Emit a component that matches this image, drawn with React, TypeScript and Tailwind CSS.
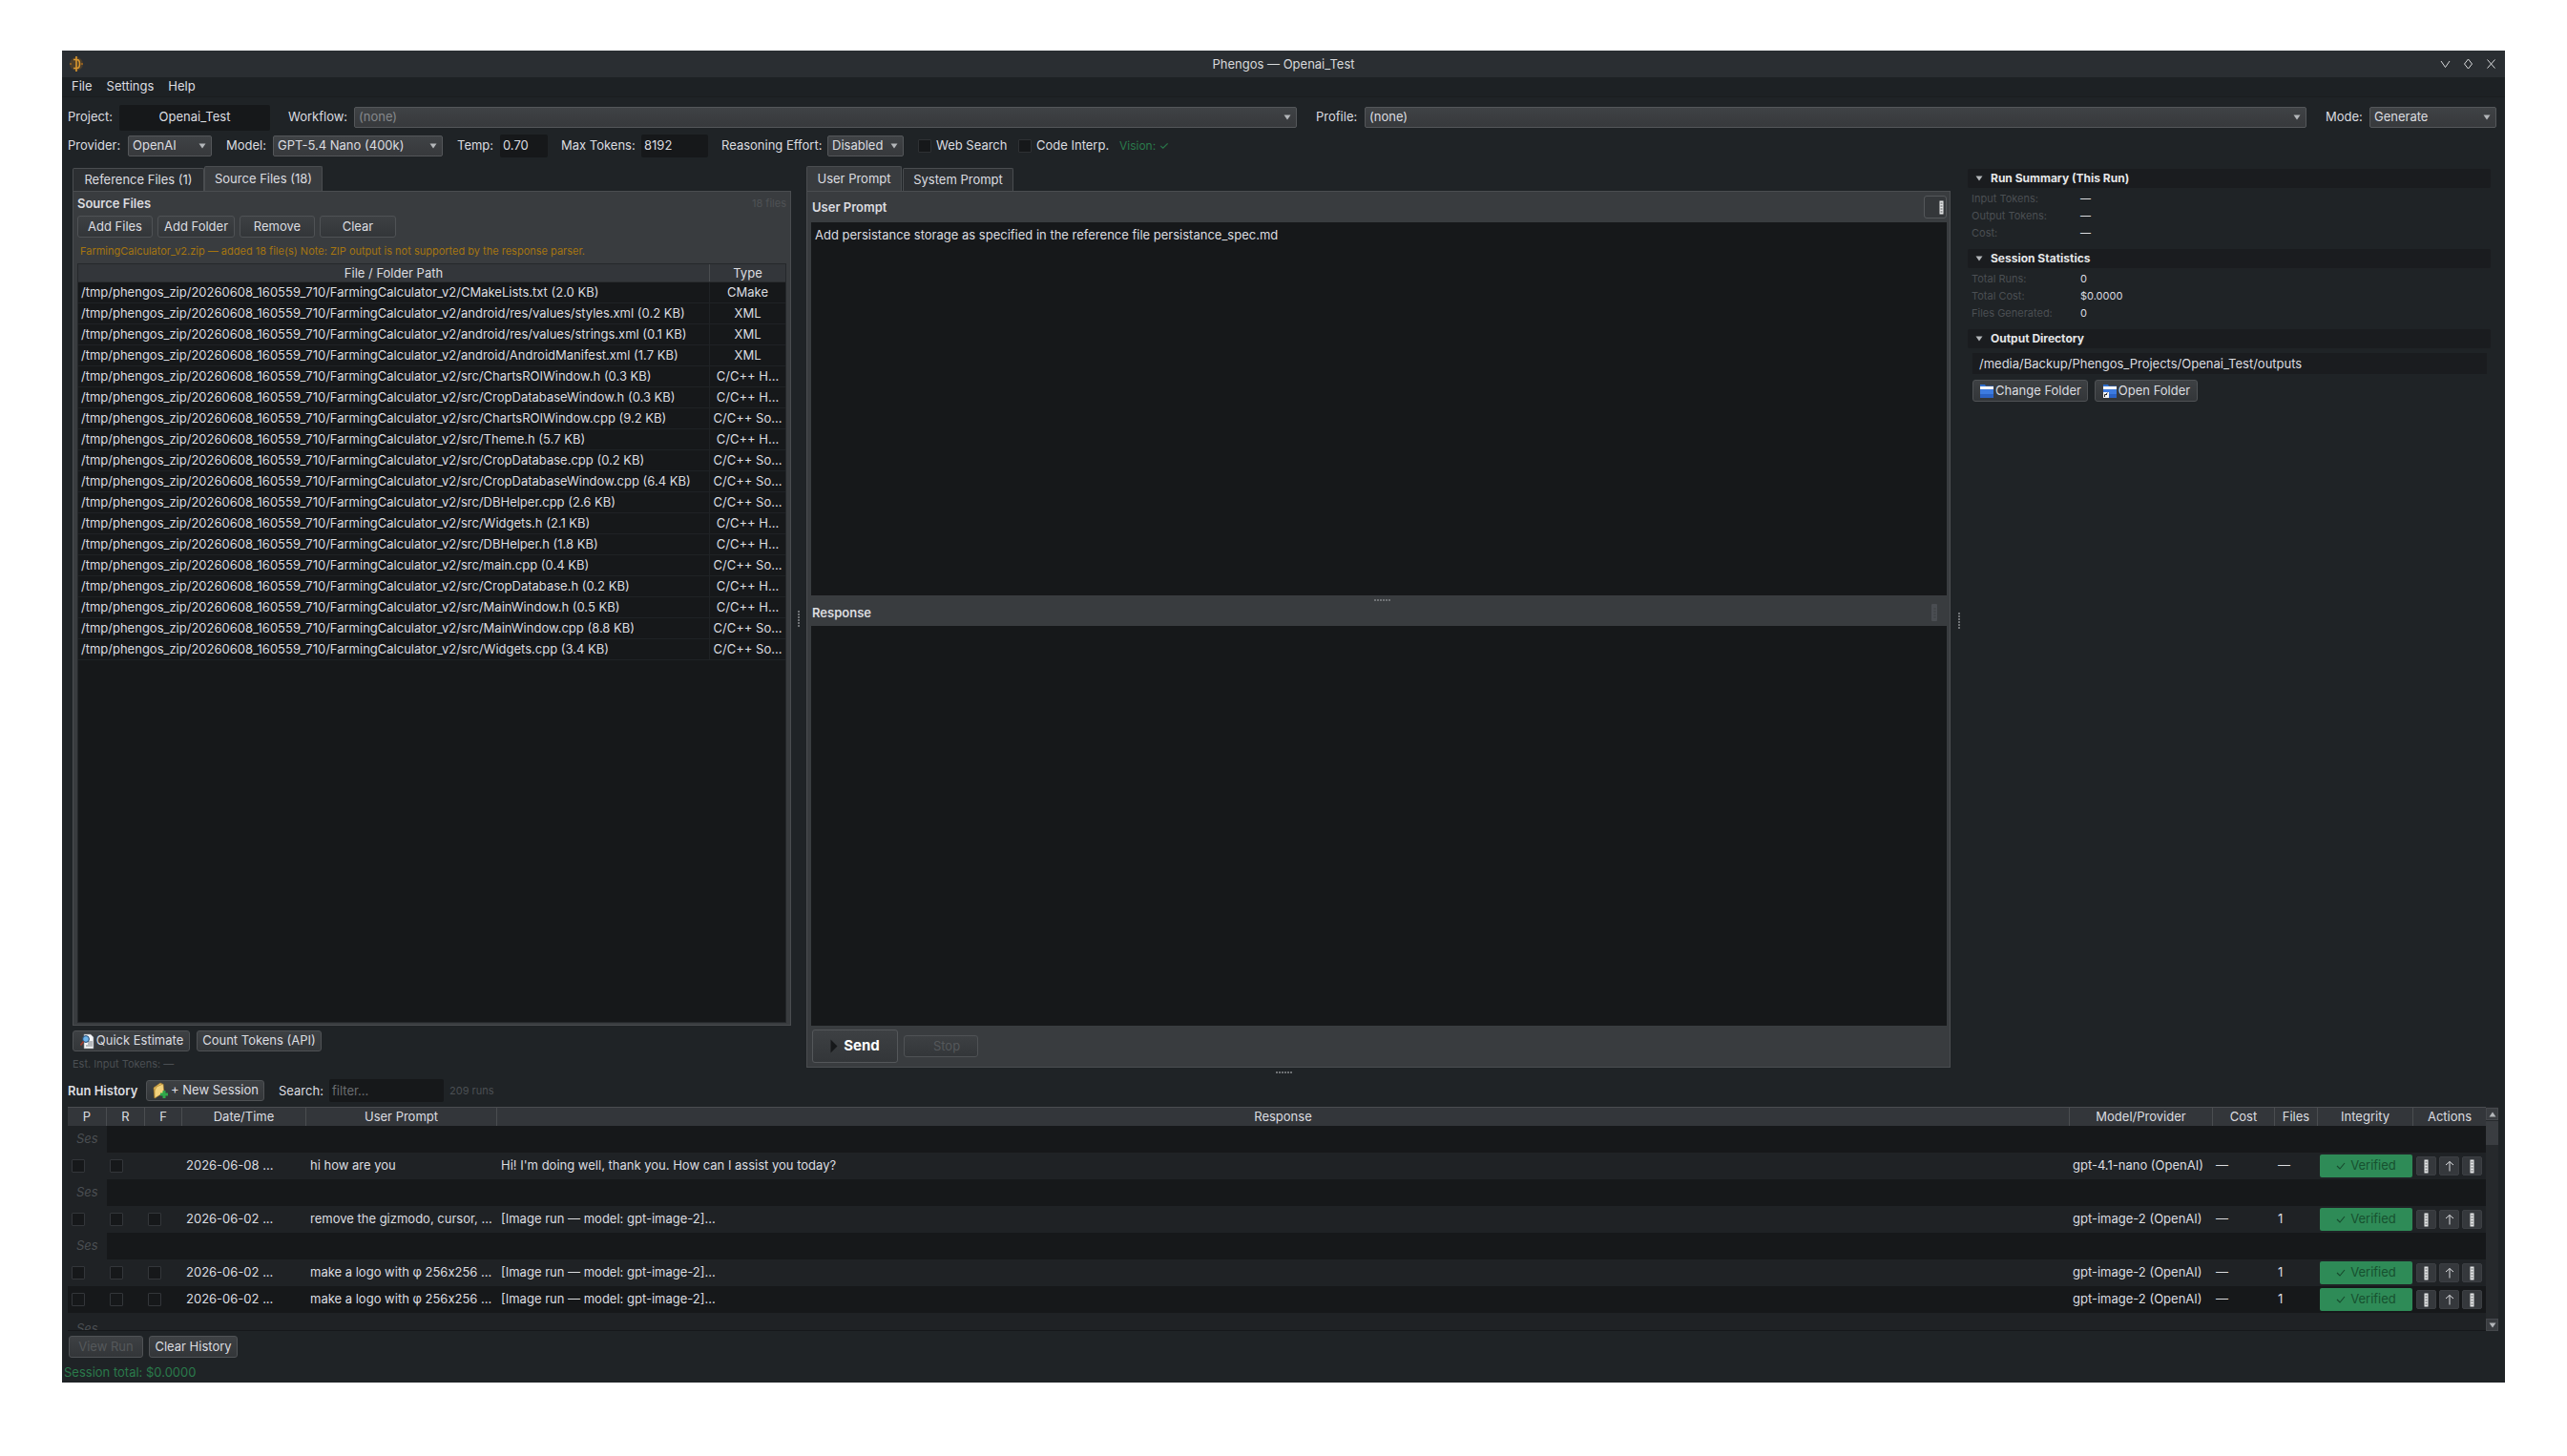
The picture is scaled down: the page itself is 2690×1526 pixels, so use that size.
import type { ReactNode } from "react";

const FILES: [string, string][] = [
  ["CMakeLists.txt (2.0 KB)", "CMake"],
  ["android/res/values/styles.xml (0.2 KB)", "XML"],
  ["android/res/values/strings.xml (0.1 KB)", "XML"],
  ["android/AndroidManifest.xml (1.7 KB)", "XML"],
  ["src/ChartsROIWindow.h (0.3 KB)", "C/C++ H..."],
  ["src/CropDatabaseWindow.h (0.3 KB)", "C/C++ H..."],
  ["src/ChartsROIWindow.cpp (9.2 KB)", "C/C++ So..."],
  ["src/Theme.h (5.7 KB)", "C/C++ H..."],
  ["src/CropDatabase.cpp (0.2 KB)", "C/C++ So..."],
  ["src/CropDatabaseWindow.cpp (6.4 KB)", "C/C++ So..."],
  ["src/DBHelper.cpp (2.6 KB)", "C/C++ So..."],
  ["src/Widgets.h (2.1 KB)", "C/C++ H..."],
  ["src/DBHelper.h (1.8 KB)", "C/C++ H..."],
  ["src/main.cpp (0.4 KB)", "C/C++ So..."],
  ["src/CropDatabase.h (0.2 KB)", "C/C++ H..."],
  ["src/MainWindow.h (0.5 KB)", "C/C++ H..."],
  ["src/MainWindow.cpp (8.8 KB)", "C/C++ So..."],
  ["src/Widgets.cpp (3.4 KB)", "C/C++ So..."],
];

const ZIP_ROOT = "/tmp/phengos_zip/20260608_160559_710/FarmingCalculator_v2/";

const HISTORY_COLS =
  "grid grid-cols-[40px_40px_39px_130px_200px_1648px_150px_65px_45px_100px_77px]";

function Arrow({ up = false }: { up?: boolean }) {
  return (
    <svg width="8" height="6" viewBox="0 0 8 6" className="shrink-0">
      <path d={up ? "M4 0.5 L7.5 5.5 L0.5 5.5 Z" : "M0.5 0.5 L7.5 0.5 L4 5.5 Z"} fill="#b4b7ba" />
    </svg>
  );
}

function Combo({
  w,
  children,
  dim = false,
}: {
  w: string;
  children: ReactNode;
  dim?: boolean;
}) {
  return (
    <div
      className={`${w} h-[22px] shrink-0 flex items-center justify-between pl-[4px] pr-[5px] rounded-[2px] border border-[#54575a] bg-gradient-to-b from-[#3f4245] to-[#37393c] ${
        dim ? "text-[#85888b]" : "text-[#dcdde0]"
      }`}
    >
      <span>{children}</span>
      <Arrow />
    </div>
  );
}

function Field({ w, children }: { w: string; children?: ReactNode }) {
  return (
    <div className={`${w} h-[24px] shrink-0 flex items-center pl-[3px] rounded-[2px] bg-[#16181a] text-[#dcdde0]`}>
      {children}
    </div>
  );
}

function Btn({
  w,
  h = "h-[23px]",
  children,
  disabled = false,
}: {
  w: string;
  h?: string;
  children: ReactNode;
  disabled?: boolean;
}) {
  return (
    <div
      className={`${w} ${h} shrink-0 flex items-center justify-center gap-[1px] rounded-[3px] border border-[#4f5255] bg-gradient-to-b from-[#3d4043] to-[#333639] ${
        disabled ? "text-[#55585b]" : "text-[#dcdde0]"
      }`}
    >
      {children}
    </div>
  );
}

function Tofu({ light = true }: { light?: boolean }) {
  return (
    <svg width="5" height="15" viewBox="0 0 5 15" className="shrink-0">
      <rect x="0.5" y="0.5" width="4" height="14" fill={light ? "#e4e5e6" : "#4a4e52"} stroke="none" />
      <path d="M1.5 3 H3.5 M1.5 6 H3.5 M1.5 9 H3.5 M1.5 12 H3.5" stroke={light ? "#55585b" : "#383b3e"} />
    </svg>
  );
}

function Dots({ vertical = false }: { vertical?: boolean }) {
  return vertical ? (
    <div className="flex flex-col gap-[1px]">
      {[0, 1, 2, 3, 4, 5].map((i) => (
        <span key={i} className="w-[2px] h-[2px] bg-[#6f7275]" />
      ))}
    </div>
  ) : (
    <div className="flex gap-[1px]">
      {[0, 1, 2, 3, 4, 5].map((i) => (
        <span key={i} className="w-[2px] h-[2px] bg-[#6f7275]" />
      ))}
    </div>
  );
}

function FolderIcon({ link = false }: { link?: boolean }) {
  return (
    <svg width="16" height="18" viewBox="0 0 16 18" className="shrink-0">
      <path d="M1 2 H6 L7 3.5 H15 V5 H1 Z" fill="#2f6fd0" />
      <rect x="1" y="4" width="14" height="3" fill="#f2f4f8" />
      <rect x="1" y="7" width="14" height="9" fill="#3d7be0" />
      <rect x="1" y="12" width="14" height="4" fill="#2b62c4" />
      {link && (
        <g>
          <rect x="1" y="10" width="6" height="6" fill="#f5f5f5" />
          <path d="M2.5 15 V12.5 H5 M3 13 L5.5 10.8" stroke="#222" strokeWidth="1" fill="none" />
        </g>
      )}
    </svg>
  );
}

function EstimateIcon() {
  return (
    <svg width="17" height="17" viewBox="0 0 17 17" className="shrink-0">
      <path d="M5 1 H12 L15 4 V16 H5 Z" fill="#f4f5f7" stroke="#7d8288" strokeWidth="0.6" />
      <path d="M9 9 H14 M9 11 H14 M7 13 H14" stroke="#5a6068" strokeWidth="0.8" />
      <circle cx="7" cy="6" r="3.4" fill="#6fb4ea" stroke="#20456e" strokeWidth="1" />
      <path d="M4.6 8.6 L1.5 12.5" stroke="#a33a2c" strokeWidth="1.6" />
    </svg>
  );
}

function NewSessionIcon() {
  return (
    <svg width="19" height="20" viewBox="0 0 19 20" className="shrink-0">
      <path d="M2 7 L9 2 L11 3 L11 12 L3 18 Z" fill="#e6bc5c" stroke="#a27a2a" strokeWidth="0.6" />
      <path d="M3 10 L5 6 L12 3 L13 12 L3 18 Z" fill="#f3d27c" stroke="#a27a2a" strokeWidth="0.6" />
      <path d="M13 10 V18 M9 14 H17" stroke="#2fa84a" strokeWidth="3" />
    </svg>
  );
}

function Logo() {
  return (
    <svg width="16" height="18" viewBox="0 0 16 18" className="shrink-0">
      <circle cx="8" cy="9" r="7" fill="#8a5a1c" opacity="0.35" />
      <path
        d="M8 1 V17 M5 4.5 H8.5 C12.5 4.5 12.5 13.5 8.5 13.5 H5"
        stroke="#d8962f"
        strokeWidth="1.6"
        fill="none"
      />
      <circle cx="2" cy="9" r="1" fill="#a56a1e" />
      <circle cx="14" cy="9" r="1" fill="#a56a1e" />
    </svg>
  );
}

function Section({ title }: { title: string }) {
  return (
    <div className="h-[20px] flex items-center gap-[8px] pl-[8px] rounded-[2px] bg-[#1a1c1f] text-[#e6e7e8] font-bold text-[12px]">
      <Arrow />
      <span>{title}</span>
    </div>
  );
}

function Stat({ label, value }: { label: string; value: string }) {
  return (
    <div className="h-[18px] flex items-center pl-[4px] text-[11px]">
      <span className="w-[114px] text-[#4b4f53]">{label}</span>
      <span className="text-[#dcdde0]">{value}</span>
    </div>
  );
}

function Check({ hidden = false }: { hidden?: boolean }) {
  return (
    <div className="flex items-center pl-[4px]">
      {!hidden && <span className="w-[14px] h-[14px] rounded-[1px] bg-[#16181a] border border-[#33363a]" />}
    </div>
  );
}

function RowAction({ children }: { children: ReactNode }) {
  return (
    <div className="w-[21px] h-[20px] flex items-center justify-center rounded-[2px] bg-[#35383c] border border-[#3c3f43]">
      {children}
    </div>
  );
}

function SessionRow() {
  return (
    <div className={`${HISTORY_COLS} h-[28px] bg-[#16181a]`}>
      <div className="w-[41px] h-full flex items-center pl-[9px] bg-[#1f2225] text-[#4b4f53] italic">Ses</div>
    </div>
  );
}

function RunRow({
  date,
  prompt,
  response,
  model,
  cost,
  files,
  dark = false,
  noFiles = false,
}: {
  date: string;
  prompt: string;
  response: string;
  model: string;
  cost: string;
  files: string;
  dark?: boolean;
  noFiles?: boolean;
}) {
  return (
    <div className={`${HISTORY_COLS} h-[28px] text-[#dcdde0] ${dark ? "bg-[#16181a]" : "bg-[#1f2225]"}`}>
      <Check />
      <Check />
      <Check hidden={noFiles} />
      <div className="flex items-center pl-[5px]">{date}</div>
      <div className="flex items-center pl-[5px]">{prompt}</div>
      <div className="flex items-center pl-[5px]">{response}</div>
      <div className="flex items-center pl-[4px]">{model}</div>
      <div className="flex items-center pl-[4px]">{cost}</div>
      <div className="flex items-center pl-[4px]">{files}</div>
      <div className="flex items-center pl-[3px]">
        <div className="w-[97px] h-[24px] flex items-center justify-center gap-[5px] rounded-[2px] bg-[#2e8b57] text-[#17512f]">
          <svg width="10" height="8" viewBox="0 0 10 8">
            <path d="M1 4 L4 7 L9 1" stroke="#174a2d" strokeWidth="1.1" fill="none" />
          </svg>
          <span>Verified</span>
        </div>
      </div>
      <div className="flex items-center gap-[3px] pl-[4px]">
        <RowAction>
          <Tofu />
        </RowAction>
        <RowAction>
          <svg width="10" height="12" viewBox="0 0 10 12">
            <path d="M5 11.5 V1.5 M1 5 L5 1.5 L9 5" stroke="#dcdde0" strokeWidth="1" fill="none" />
          </svg>
        </RowAction>
        <RowAction>
          <Tofu />
        </RowAction>
      </div>
    </div>
  );
}

export default function App() {
  return (
    <div className="w-[2690px] h-[1526px] bg-white pl-[65px] pt-[53px] overflow-hidden">
      <div className="w-[2560px] h-[1396px] flex flex-col bg-[#1f2326] text-[13px] text-[#dcdde0] font-['Inter','Liberation_Sans',sans-serif]">
        {/* title bar */}
        <div className="h-[28px] shrink-0 relative flex items-center justify-center pt-[2px] bg-[#2a2e32]">
          <div className="absolute left-[7px] top-[5px]">
            <Logo />
          </div>
          <span className="text-[#d8d9db]">Phengos — Openai_Test</span>
          <div className="absolute right-[9px] top-[8px] flex items-center gap-[13px]">
            <svg width="11" height="12" viewBox="0 0 11 12">
              <path d="M1 3 L5.5 9.5 L10 3" stroke="#d8d9db" strokeWidth="1" fill="none" />
            </svg>
            <svg width="11" height="12" viewBox="0 0 11 12">
              <path d="M5.5 1 L9.5 6 L5.5 11 L1.5 6 Z" stroke="#d8d9db" strokeWidth="1" fill="none" />
            </svg>
            <svg width="11" height="12" viewBox="0 0 11 12">
              <path d="M1.5 1.5 L9.5 10.5 M9.5 1.5 L1.5 10.5" stroke="#d8d9db" strokeWidth="1" fill="none" />
            </svg>
          </div>
        </div>

        {/* menu bar */}
        <div className="h-[21px] shrink-0 flex items-center gap-[15px] pl-[10px] bg-[#1d2124] border-b border-[#1a1d1f]">
          <span>File</span>
          <span>Settings</span>
          <span>Help</span>
        </div>

        {/* project row */}
        <div className="h-[22px] mt-[10px] shrink-0 flex items-center pl-[6px]">
          <span className="w-[54px]">Project:</span>
          <div className="w-[158px] h-[27px] shrink-0 flex items-center justify-center rounded-[2px] bg-[#16181a]">
            Openai_Test
          </div>
          <span className="ml-[19px] w-[69px]">Workflow:</span>
          <Combo w="w-[988px]" dim>
            (none)
          </Combo>
          <span className="ml-[20px] w-[51px]">Profile:</span>
          <Combo w="w-[987px]">(none)</Combo>
          <span className="ml-[20px] w-[46px]">Mode:</span>
          <Combo w="w-[133px]">Generate</Combo>
        </div>

        {/* provider row */}
        <div className="h-[22px] mt-[8px] shrink-0 flex items-center pl-[6px]">
          <span className="w-[63px]">Provider:</span>
          <Combo w="w-[88px]">OpenAI</Combo>
          <span className="ml-[15px] w-[49px]">Model:</span>
          <Combo w="w-[178px]">GPT-5.4 Nano (400k)</Combo>
          <span className="ml-[15px] w-[45px]">Temp:</span>
          <Field w="w-[50px]">0.70</Field>
          <span className="ml-[14px] w-[84px]">Max Tokens:</span>
          <Field w="w-[70px]">8192</Field>
          <span className="ml-[14px] w-[111px]">Reasoning Effort:</span>
          <Combo w="w-[80px]">Disabled</Combo>
          <span className="ml-[15px] w-[14px] h-[14px] rounded-[1px] bg-[#16181a] border border-[#2e3134]" />
          <span className="ml-[5px] w-[86px]">Web Search</span>
          <span className="w-[14px] h-[14px] rounded-[1px] bg-[#16181a] border border-[#2e3134]" />
          <span className="ml-[5px] w-[87px]">Code Interp.</span>
          <span className="text-[#2a7a4b] text-[12px]">Vision: ✓</span>
        </div>

        {/* main panes */}
        <div className="h-[945px] mt-[10px] shrink-0 flex pl-[11px]">
          <div className="w-[753px] shrink-0 flex flex-col">
            <div className="h-[26px] shrink-0 flex items-end">
              <div className="w-[138px] h-[24px] flex items-center justify-center rounded-t-[2px] border border-[#4a4d50] border-b-0 bg-[#2c2f32]">
                Reference Files (1)
              </div>
              <div className="w-[124px] h-[26px] flex items-center justify-center rounded-t-[2px] border border-[#4a4d50] border-b-0 bg-[#393c3f]">
                Source Files (18)
              </div>
            </div>
            <div className="h-[875px] shrink-0 flex flex-col px-[4px] border border-[#4a4d50] bg-[#393c3f]">
              <div className="h-[25px] shrink-0 flex items-center justify-between">
                <span className="font-semibold">Source Files</span>
                <span className="text-[11px] text-[#4f5255]">18 files</span>
              </div>
              <div className="h-[23px] shrink-0 flex gap-[5px]">
                <Btn w="w-[79px]">Add Files</Btn>
                <Btn w="w-[81px]">Add Folder</Btn>
                <Btn w="w-[79px]">Remove</Btn>
                <Btn w="w-[80px]">Clear</Btn>
              </div>
              <div className="h-[27px] shrink-0 flex items-center pl-[3px] pt-[1px] text-[11px] text-[#a5750f]">
                FarmingCalculator_v2.zip — added 18 file(s) Note: ZIP output is not supported by the response parser.
              </div>
              <div className="flex-1 min-h-0 flex flex-col border border-[#25282b] bg-[#16181a] mb-[2px]">
                <div className="h-[19px] shrink-0 flex bg-[#33363a] border-b border-[#2a2d30]">
                  <div className="w-[661px] text-center">File / Folder Path</div>
                  <div className="flex-1 text-center border-l border-[#4a4d50]">Type</div>
                </div>
                {FILES.map(([path, type]) => (
                  <div key={path} className="h-[22px] shrink-0 flex items-center border-b border-[#1f2225]">
                    <div className="w-[661px] pl-[3px] whitespace-nowrap">
                      {ZIP_ROOT}
                      {path}
                    </div>
                    <div className="flex-1 h-full flex items-center justify-center border-l border-[#1f2225]">{type}</div>
                  </div>
                ))}
              </div>
            </div>
            <div className="flex gap-[7px] mt-[5px]">
              <Btn w="w-[123px]" h="h-[22px]">
                <EstimateIcon />
                Quick Estimate
              </Btn>
              <Btn w="w-[131px]" h="h-[22px]">
                Count Tokens (API)
              </Btn>
            </div>
            <div className="h-[16px] mt-[5px] flex items-center text-[11px] text-[#4b4f53]">Est. Input Tokens: —</div>
          </div>

          {/* vertical splitter */}
          <div className="w-[16px] shrink-0 flex justify-center pt-[466px]">
            <Dots vertical />
          </div>

          <div className="w-[1199px] shrink-0 flex flex-col">
            <div className="h-[26px] shrink-0 flex items-end">
              <div className="w-[100px] h-[26px] flex items-center justify-center rounded-t-[2px] border border-[#4a4d50] border-b-0 bg-[#393c3f]">
                User Prompt
              </div>
              <div className="w-[116px] h-[24px] ml-[1px] flex items-center justify-center rounded-t-[2px] border border-[#4a4d50] border-b-0 bg-[#2c2f32]">
                System Prompt
              </div>
            </div>
            <div className="flex-1 min-h-0 flex flex-col border border-[#4a4d50] bg-[#393c3f] pl-[4px] pr-[3px]">
              <div className="h-[32px] shrink-0 flex items-center justify-between font-semibold">
                <span className="pl-[1px] pt-[2px]">User Prompt</span>
                <div className="w-[24px] h-[24px] flex items-center justify-end pr-[2px] rounded-[3px] border border-[#54575a] bg-[#34373a]">
                  <Tofu />
                </div>
              </div>
              <div className="h-[391px] shrink-0 bg-[#16181a] pl-[4px] pt-[4px]">
                Add persistance storage as specified in the reference file persistance_spec.md
              </div>
              <div className="h-[32px] shrink-0 relative flex items-center font-semibold">
                <span className="pl-[1px] pt-[5px]">Response</span>
                <div className="absolute left-[590px] top-[4px]">
                  <Dots />
                </div>
                <div className="absolute right-[10px] top-[9px] flex items-center justify-center w-[6px] h-[18px] rounded-[1px] bg-[#4a4d52]">
                  <Tofu light={false} />
                </div>
              </div>
              <div className="h-[419px] shrink-0 bg-[#16181a]" />
              <div className="flex-1 min-h-0 flex items-center gap-[6px] pl-[1px]">
                <div className="w-[90px] h-[35px] shrink-0 flex items-center justify-center gap-[6px] rounded-[3px] border border-[#54575a] bg-gradient-to-b from-[#3d4043] to-[#333639] font-bold text-[15px] text-white">
                  <svg width="8" height="15" viewBox="0 0 8 15">
                    <path d="M0.5 0.5 L7.5 7.5 L0.5 14.5 Z" fill="#16181a" />
                  </svg>
                  Send
                </div>
                <Btn w="w-[78px]" disabled>
                  <span className="pl-[12px]">Stop</span>
                </Btn>
              </div>
            </div>
          </div>

          {/* right splitter */}
          <div className="w-[18px] shrink-0 flex justify-center pt-[468px]">
            <Dots vertical />
          </div>

          <div className="w-[548px] shrink-0 flex flex-col pt-[3px]">
            <Section title="Run Summary (This Run)" />
            <div className="pt-[2px] pb-[8px]">
              <Stat label="Input Tokens:" value="—" />
              <Stat label="Output Tokens:" value="—" />
              <Stat label="Cost:" value="—" />
            </div>
            <Section title="Session Statistics" />
            <div className="pt-[2px] pb-[8px]">
              <Stat label="Total Runs:" value="0" />
              <Stat label="Total Cost:" value="$0.0000" />
              <Stat label="Files Generated:" value="0" />
            </div>
            <Section title="Output Directory" />
            <div className="w-[539px] h-[22px] mt-[5px] ml-[5px] flex items-center pl-[7px] pt-[2px] bg-[#1a1c1f]">
              /media/Backup/Phengos_Projects/Openai_Test/outputs
            </div>
            <div className="flex gap-[7px] mt-[6px] ml-[5px]">
              <Btn w="w-[121px]" h="h-[23px]">
                <FolderIcon />
                Change Folder
              </Btn>
              <Btn w="w-[108px]" h="h-[23px]">
                <FolderIcon link />
                Open Folder
              </Btn>
            </div>
          </div>
        </div>

        {/* horizontal splitter */}
        <div className="h-[12px] shrink-0 flex items-center justify-center pb-[3px]">
          <Dots />
        </div>

        {/* run history toolbar */}
        <div className="h-[24px] shrink-0 flex items-center pl-[6px]">
          <span className="w-[82px] font-semibold pt-[1px]">Run History</span>
          <Btn w="w-[124px]" h="h-[22px]">
            <NewSessionIcon />+ New Session
          </Btn>
          <span className="ml-[15px] w-[53px] pt-[1px]">Search:</span>
          <div className="w-[120px] h-[24px] flex items-center pl-[3px] pt-[1px] rounded-[2px] bg-[#16181a] text-[#6a6d70]">
            filter...
          </div>
          <span className="ml-[6px] pt-[1px] text-[11px] text-[#4b4f53]">209 runs</span>
        </div>

        {/* run history table */}
        <div className="h-[235px] mt-[5px] ml-[6px] mr-[7px] shrink-0 flex">
          <div className="w-[2534px] shrink-0 flex flex-col">
            <div className={`${HISTORY_COLS} h-[20px] shrink-0 bg-[#33363a] border-t border-[#4a4d50] text-center`}>
              {[
                "P",
                "R",
                "F",
                "Date/Time",
                "User Prompt",
                "Response",
                "Model/Provider",
                "Cost",
                "Files",
                "Integrity",
                "Actions",
              ].map((h, i) => (
                <div key={h} className={i === 0 ? "" : "border-l border-[#4a4d50]"}>
                  {h}
                </div>
              ))}
            </div>
            <div className="flex-1 min-h-0 overflow-hidden border-b border-[#16181a]">
              <SessionRow />
              <RunRow
                date="2026-06-08 ..."
                prompt="hi how are you"
                response="Hi! I'm doing well, thank you. How can I assist you today?"
                model="gpt-4.1-nano (OpenAI)"
                cost="—"
                files="—"
                noFiles
              />
              <SessionRow />
              <RunRow
                date="2026-06-02 ..."
                prompt="remove the gizmodo, cursor, ..."
                response="[Image run — model: gpt-image-2]..."
                model="gpt-image-2 (OpenAI)"
                cost="—"
                files="1"
              />
              <SessionRow />
              <RunRow
                date="2026-06-02 ..."
                prompt="make a logo with φ 256x256 ..."
                response="[Image run — model: gpt-image-2]..."
                model="gpt-image-2 (OpenAI)"
                cost="—"
                files="1"
              />
              <RunRow
                date="2026-06-02 ..."
                prompt="make a logo with φ 256x256 ..."
                response="[Image run — model: gpt-image-2]..."
                model="gpt-image-2 (OpenAI)"
                cost="—"
                files="1"
                dark
              />
              <div className={`${HISTORY_COLS} h-[28px] bg-[#1f2225]`}>
                <div className="flex items-start pt-[7px] pl-[9px] text-[#4b4f53] italic w-[41px]">Ses</div>
              </div>
            </div>
          </div>
          <div className="w-[13px] shrink-0 flex flex-col bg-[#26292c] pt-[1px]">
            <div className="h-[13px] shrink-0 flex items-center justify-center bg-[#3a3d41] border border-[#45484c]">
              <Arrow up />
            </div>
            <div className="h-[25px] shrink-0 mt-[1px] bg-[#3a3d41]" />
            <div className="flex-1" />
            <div className="h-[13px] shrink-0 flex items-center justify-center bg-[#3a3d41] border border-[#45484c]">
              <Arrow />
            </div>
          </div>
        </div>

        {/* history buttons */}
        <div className="h-[22px] mt-[5px] ml-[7px] shrink-0 flex gap-[6px]">
          <Btn w="w-[78px]" h="h-[23px]" disabled>
            View Run
          </Btn>
          <Btn w="w-[93px]" h="h-[23px]">
            Clear History
          </Btn>
        </div>
        <div className="h-[20px] mt-[7px] ml-[2px] shrink-0 flex items-center text-[#2a7a4b]">Session total: $0.0000</div>
      </div>
    </div>
  );
}
